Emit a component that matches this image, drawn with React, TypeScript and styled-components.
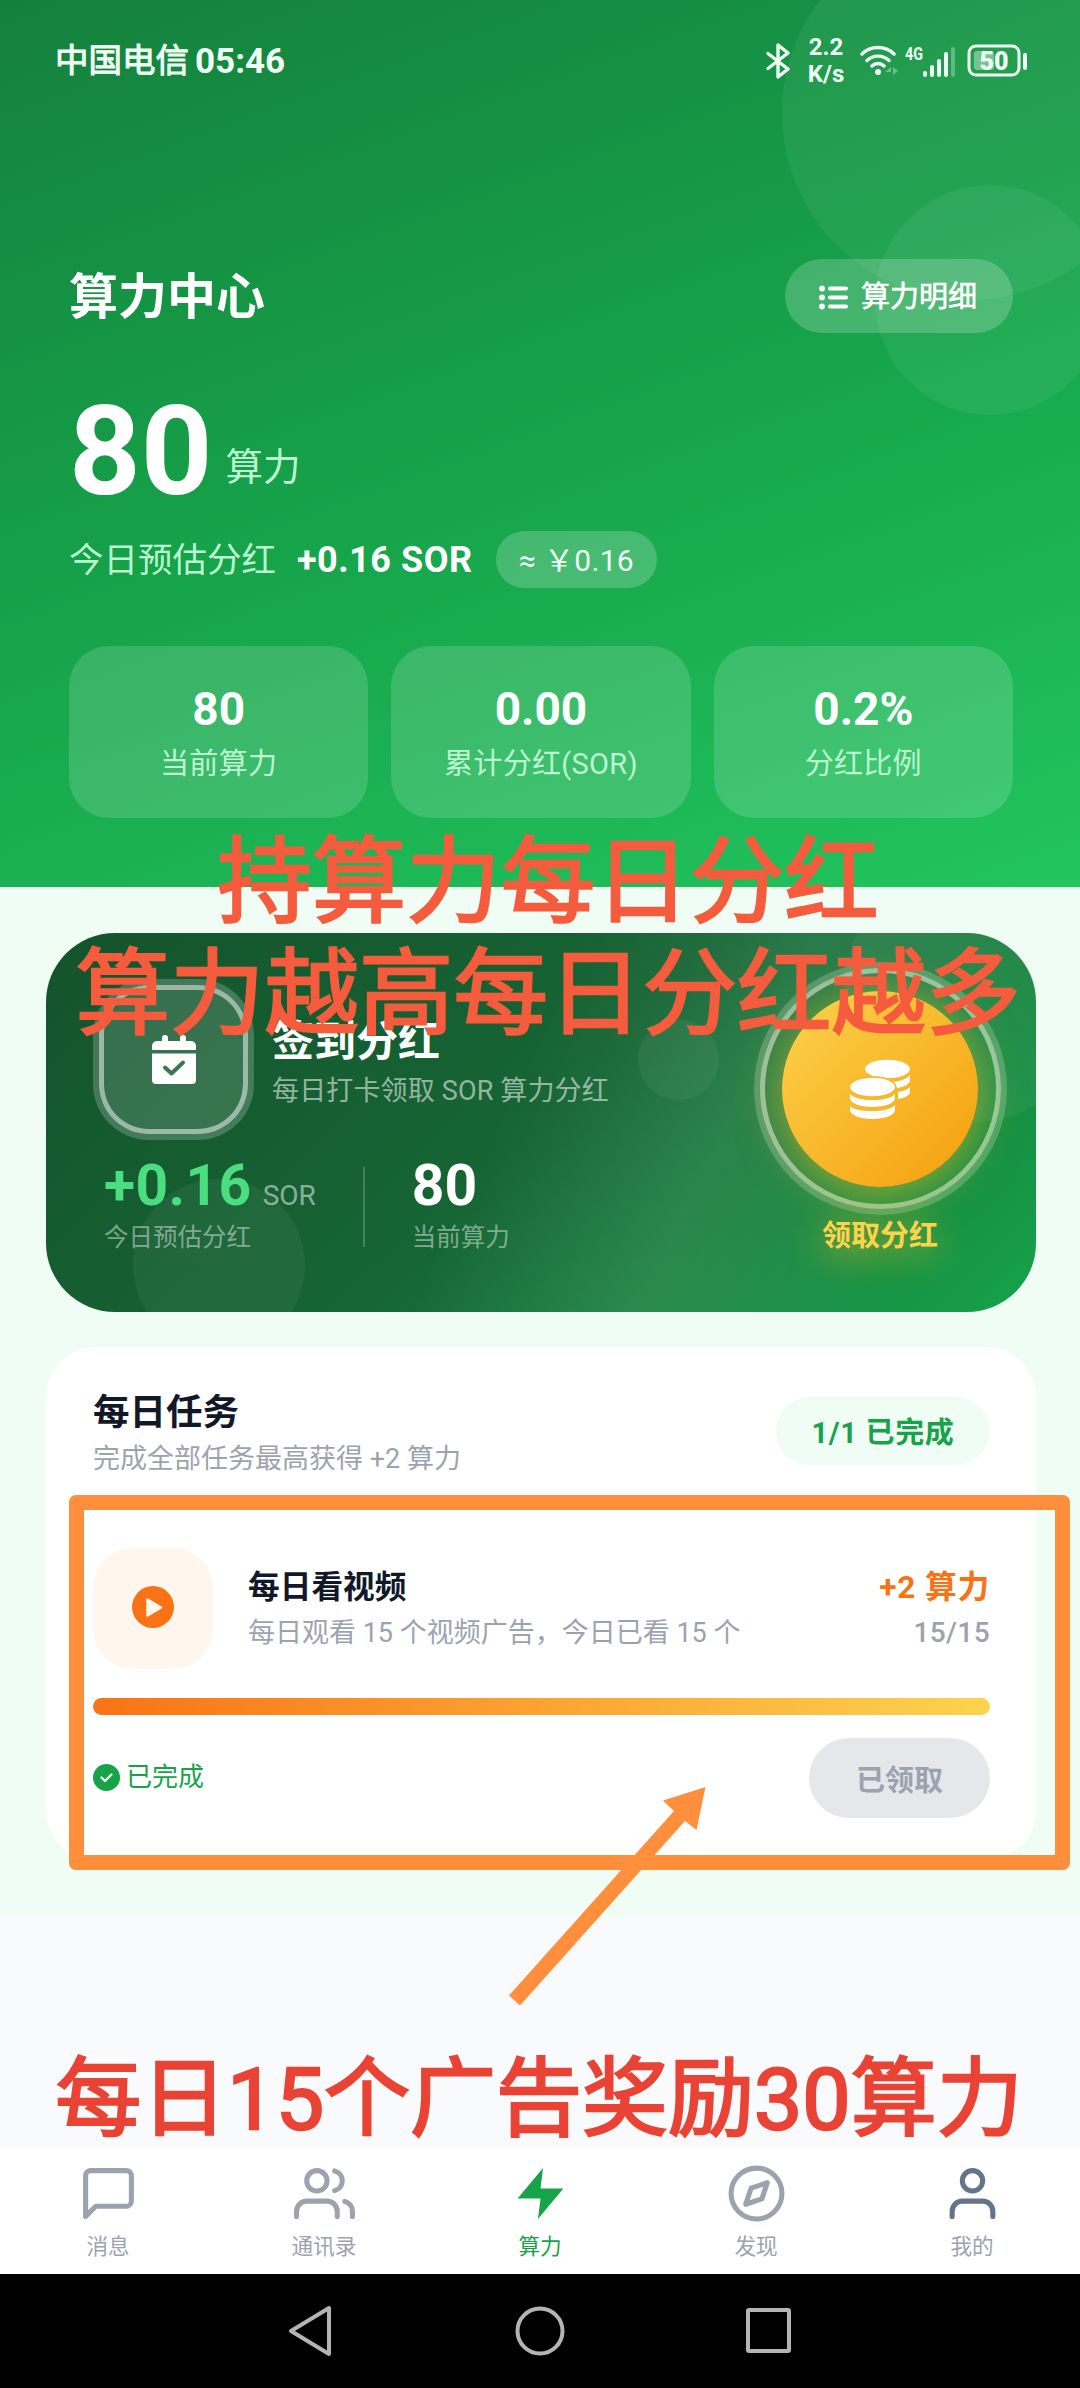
import React from "react";
import styled, { createGlobalStyle, css } from "styled-components";

const latin = `Roboto, "Noto Sans CJK SC", sans-serif`;

const Global = createGlobalStyle`
  * { box-sizing: border-box; }
  body { margin: 0; background: #f9fafb; font-family: ${latin}; }
`;

const Screen = styled.div`
  position: relative;
  width: 1080px;
  height: 2388px;
  overflow: hidden;
  display: flex;
  flex-direction: column;
  background: #f9fafb;
`;

const Txt = styled.span<{ $s: number; $c: string; $w?: number; $lh?: number; $ls?: number; $fat?: number }>`
  font-size: ${(p) => p.$s}px;
  line-height: ${(p) => p.$lh ?? p.$s}px;
  color: ${(p) => p.$c};
  font-weight: ${(p) => p.$w ?? 400};
  letter-spacing: ${(p) => p.$ls ?? 0}px;
  white-space: nowrap;
  ${(p) => p.$fat && css`-webkit-text-stroke: ${p.$fat}px ${p.$c};`}
`;

/* ---------- hero ---------- */
const Hero = styled.header`
  position: relative;
  overflow: hidden;
  height: 887px;
  flex: none;
  display: flex;
  flex-direction: column;
  background: linear-gradient(160deg, #15803d 0%, #16a34a 50%, #22c55e 100%);
`;

const Bubble = styled.i<{ $x: number; $y: number; $d: number; $a: number }>`
  position: absolute;
  left: ${(p) => p.$x}px;
  top: ${(p) => p.$y}px;
  width: ${(p) => p.$d}px;
  height: ${(p) => p.$d}px;
  border-radius: 50%;
  background: rgba(255, 255, 255, ${(p) => p.$a});
`;

const StatusBar = styled.div`
  position: relative;
  height: 120px;
  padding: 2px 52px 0 55px;
  display: flex;
  align-items: center;
  justify-content: space-between;
`;

const StatusGroup = styled.div<{ $gap: number }>`
  display: flex;
  align-items: center;
  gap: ${(p) => p.$gap}px;
`;

const Speed = styled.div`
  display: flex;
  flex-direction: column;
  align-items: center;
  width: 34px;
  margin: 0 17px 0 19px;
`;

const TitleRow = styled.div`
  position: relative;
  margin-top: 139px;
  height: 74px;
  padding: 0 67px 0 69px;
  display: flex;
  align-items: center;
  justify-content: space-between;
`;

const PageTitle = styled.h1`
  margin: 0;
  padding-top: 3px;
  font-size: 49px;
  line-height: 54px;
  font-weight: 700;
  color: #fff;
`;

const DetailButton = styled.button`
  width: 228px;
  height: 74px;
  border: 0;
  border-radius: 37px;
  padding: 2px 2px 0 0;
  font-family: inherit;
  background: rgba(255, 255, 255, 0.2);
  display: flex;
  align-items: center;
  justify-content: center;
  gap: 12px;
`;

const Balance = styled.div`
  margin-top: 51px;
  height: 136px;
  padding-left: 69px;
  display: flex;
  align-items: flex-end;
  gap: 13px;
`;

const Unit = styled.span`
  margin-bottom: 34px;
  font-size: 37.5px;
  line-height: 38px;
  color: #bbf7d0;
`;

const EstimateRow = styled.div`
  margin-top: 11px;
  height: 57px;
  padding-left: 69px;
  display: flex;
  align-items: center;
`;

const Gain = styled.strong`
  margin-left: 21px;
  width: 177px;
  font-size: 36px;
  line-height: 36px;
  letter-spacing: 0.5px;
  color: #fff;
  white-space: nowrap;
`;

const RatePill = styled.div`
  margin-left: 22px;
  width: 161px;
  height: 57px;
  border-radius: 29px;
  padding-top: 2px;
  background: rgba(255, 255, 255, 0.2);
  display: flex;
  align-items: center;
  justify-content: center;
`;

const Stats = styled.div`
  margin-top: 58px;
  padding: 0 67px 0 69px;
  display: grid;
  grid-template-columns: repeat(3, 1fr);
  gap: 23px;
`;

const Stat = styled.div`
  height: 172px;
  border-radius: 40px;
  background: rgba(255, 255, 255, 0.15);
  display: flex;
  flex-direction: column;
  align-items: center;
  padding-top: 36px;
  gap: 10px;
`;

/* ---------- body ---------- */
const Body = styled.main`
  height: 1029px;
  flex: none;
  padding: 46px 44px 0 46px;
  display: flex;
  flex-direction: column;
  gap: 35px;
  background: #f0fdf4;
`;

const SignCard = styled.section`
  position: relative;
  overflow: hidden;
  height: 379px;
  flex: none;
  border-radius: 69px;
  background: linear-gradient(135deg, #14532d 0%, #166534 50%, #16a34a 100%);
  display: flex;
`;

const Shine = styled.i`
  position: absolute;
  inset: 0;
  background: linear-gradient(115deg, transparent 46%, rgba(255, 255, 255, 0.09) 66%, transparent 88%);
`;

const SignLeft = styled.div`
  position: relative;
  flex: 1;
  padding: 52px 0 0 53px;
`;

const SignHead = styled.div`
  display: flex;
  gap: 24px;
`;

const CalendarBox = styled.div`
  width: 149px;
  height: 149px;
  border: 5px solid rgba(255, 255, 255, 0.5);
  border-radius: 50px;
  box-shadow: 0 0 0 6px rgba(255, 255, 255, 0.2);
  background: rgba(255, 255, 255, 0.15);
  display: flex;
  align-items: center;
  justify-content: center;
`;

const SignTitles = styled.div`
  padding-top: 32px;
  display: flex;
  flex-direction: column;
  gap: 8px;
`;

const SignStats = styled.div`
  margin: 22px 0 0 5px;
  display: flex;
  align-items: flex-start;
`;

const SignStat = styled.div`
  display: flex;
  flex-direction: column;
`;

const Line = styled.div`
  display: flex;
  align-items: baseline;
  height: 65px;
  gap: 11px;
`;

const Divider = styled.i`
  width: 2px;
  height: 80px;
  margin: 11px 47px 0 47px;
  background: rgba(255, 255, 255, 0.2);
`;

const Claim = styled.div`
  position: relative;
  width: 240px;
  margin-right: 36px;
  padding-top: 35px;
  display: flex;
  flex-direction: column;
  align-items: center;
`;

const Ring = styled.div`
  width: 241px;
  height: 241px;
  flex: none;
  border: 5px solid rgba(255, 255, 255, 0.5);
  border-radius: 50%;
  box-shadow: 0 0 0 6px rgba(255, 255, 255, 0.2);
  display: flex;
  align-items: center;
  justify-content: center;
`;

const Coin = styled.div`
  width: 196px;
  height: 196px;
  border-radius: 50%;
  background: linear-gradient(135deg, #fcd34d, #f59e0b);
  box-shadow: 0 6px 46px rgba(251, 191, 36, 0.6);
  display: flex;
  align-items: center;
  justify-content: center;
`;

const ClaimLabel = styled.div`
  margin-top: 7px;
  font-size: 29px;
  line-height: 40px;
  font-weight: 700;
  color: #fcd34d;
  text-shadow: 0 6px 36px rgba(251, 191, 36, 0.9);
`;

const TaskCard = styled.section`
  height: 513px;
  flex: none;
  border-radius: 50px;
  background: #fff;
  padding: 0 46px 0 47px;
  display: flex;
  flex-direction: column;
`;

const TaskHead = styled.div`
  padding-top: 44px;
  height: 154px;
  display: flex;
  justify-content: space-between;
`;

const Stack = styled.div<{ $gap: number; $end?: boolean }>`
  display: flex;
  flex-direction: column;
  gap: ${(p) => p.$gap}px;
  ${(p) => p.$end && css`align-items: flex-end;`}
`;

const DonePill = styled.div`
  margin-top: 6px;
  width: 214px;
  height: 68px;
  border-radius: 34px;
  padding-top: 4px;
  background: #f0fdf4;
  display: flex;
  align-items: center;
  justify-content: center;
`;

const TaskRow = styled.div`
  margin-top: 47px;
  height: 121px;
  display: flex;
  align-items: center;
`;

const TaskIcon = styled.div`
  width: 120px;
  height: 121px;
  margin-right: 35px;
  padding-bottom: 3px;
  border-radius: 40px;
  background: #fff7ed;
  display: flex;
  align-items: center;
  justify-content: center;
`;

const Grow = styled.div`
  flex: 1;
`;

const Progress = styled.div`
  margin-top: 29px;
  height: 17px;
  border-radius: 9px;
  background: linear-gradient(90deg, #f97316, #fcd34d);
`;

const TaskFoot = styled.div`
  margin-top: 23px;
  height: 80px;
  display: flex;
  align-items: center;
  justify-content: space-between;
`;

const DoneMark = styled.div`
  display: flex;
  align-items: center;
  gap: 6px;
  padding-bottom: 2px;
`;

const ClaimedButton = styled.button`
  width: 181px;
  height: 80px;
  border: 0;
  border-radius: 40px;
  background: #e5e7eb;
  color: #9ca3af;
  font: 700 29px ${latin};
`;

/* ---------- bottom bars ---------- */
const Spacer = styled.div`
  flex: 1;
`;

const TabBar = styled.nav`
  height: 126px;
  background: #fff;
  display: grid;
  grid-template-columns: repeat(5, 1fr);
`;

const Tab = styled.div<{ $c: string }>`
  color: ${(p) => p.$c};
  padding-top: 15px;
  display: flex;
  flex-direction: column;
  align-items: center;
  gap: 10px;
`;

const TabLabel = styled.span<{ $active: boolean }>`
  font-size: 21.6px;
  line-height: 26px;
  color: ${(p) => (p.$active ? "#16a34a" : "#9ca3af")};
`;

const SystemNav = styled.div`
  height: 114px;
  background: #000;
  display: flex;
  align-items: center;
  justify-content: center;
  gap: 179px;
`;

/* ---------- annotations drawn over the page ---------- */
const Note = styled.div<{ $top: number; $shift: number; $s: number; $lh: number; $c: string }>`
  position: absolute;
  left: ${(p) => p.$shift}px;
  width: 1080px;
  top: ${(p) => p.$top}px;
  text-align: center;
  font-size: ${(p) => p.$s}px;
  line-height: ${(p) => p.$lh}px;
  font-weight: 400;
  color: ${(p) => p.$c};
  -webkit-text-stroke: 2.4px ${(p) => p.$c};
  white-space: nowrap;
`;

const Frame = styled.div`
  position: absolute;
  left: 69px;
  top: 1495px;
  width: 1001px;
  height: 375px;
  border: 15px solid #ff8f3c;
  border-radius: 7px;
`;

const Arrow = styled.svg`
  position: absolute;
  left: 500px;
  top: 1780px;
`;

const feather = {
  width: 61,
  height: 61,
  viewBox: "0 0 24 24",
  fill: "none",
  stroke: "currentColor",
  strokeWidth: 2,
  strokeLinecap: "round" as const,
  strokeLinejoin: "round" as const,
};

const tabs = [
  { label: "消息", color: "#9ca3af", icon: <path d="M21 15a2 2 0 0 1-2 2H7l-4 4V5a2 2 0 0 1 2-2h14a2 2 0 0 1 2 2z" /> },
  {
    label: "通讯录",
    color: "#9ca3af",
    icon: (
      <>
        <path d="M17 21v-2a4 4 0 0 0-4-4H5a4 4 0 0 0-4 4v2" />
        <circle cx="9" cy="7" r="4" />
        <path d="M23 21v-2a4 4 0 0 0-3-3.87M16 3.13a4 4 0 0 1 0 7.75" />
      </>
    ),
  },
  { label: "算力", color: "#16a34a", icon: <path d="M13 2 3 14h9l-1 8 10-12h-9z" fill="currentColor" stroke="none" /> },
  {
    label: "发现",
    color: "#9ca3af",
    icon: (
      <>
        <circle cx="12" cy="12" r="10" />
        <path d="m16.24 7.76-2.12 6.36-6.36 2.12 2.12-6.36z" />
      </>
    ),
  },
  {
    label: "我的",
    color: "#64748b",
    icon: (
      <>
        <path d="M20 21v-2a4 4 0 0 0-4-4H8a4 4 0 0 0-4 4v2" />
        <circle cx="12" cy="7" r="4" />
      </>
    ),
  },
];

const stats = [
  ["80", "当前算力"],
  ["0.00", "累计分红(SOR)"],
  ["0.2%", "分红比例"],
];

const pale = "#f0fff4";

function StatusIcons() {
  return (
    <StatusGroup $gap={0}>
      <svg width="24" height="36" viewBox="0 0 24 36" fill="none" stroke={pale} strokeWidth="3.400" strokeLinejoin="round" strokeLinecap="round">
        <path d="M2 10.500 22 26 12 34V2l10 8L2 25.500" />
      </svg>
      <Speed>
        <Txt $s={24} $lh={27} $w={700} $c={pale}>2.2</Txt>
        <Txt $s={24} $lh={27} $w={700} $c={pale}>K/s</Txt>
      </Speed>
      <svg width="44" height="34" viewBox="0 0 44 34" fill="none" stroke={pale} strokeWidth="3.400" strokeLinecap="round">
        <path d="M2 10a23 23 0 0 1 32 0M7 16.500a16 16 0 0 1 22 0M12 22a8.500 8.500 0 0 1 12 0" />
        <circle cx="18" cy="28" r="3" fill={pale} stroke="none" />
        <path d="m31 23-6 5 6 0zM33 23v8l5-4z" fill={pale} stroke="none" opacity=".35" />
      </svg>
      <svg width="52" height="36" viewBox="0 0 52 36" fill={pale}>
        <text x="1" y="17" fontFamily="Roboto" fontWeight="700" fontSize="19" textLength="18" lengthAdjust="spacingAndGlyphs">4G</text>
        <rect x="19" y="28" width="4" height="6" rx="2" />
        <rect x="26" y="22" width="4" height="12" rx="2" />
        <rect x="33" y="16" width="4" height="18" rx="2" />
        <rect x="40" y="9" width="4" height="25" rx="2" />
        <rect x="47" y="4" width="4" height="30" rx="2" opacity=".3" />
      </svg>
      <svg width="72" height="34" viewBox="0 0 72 34" fill="none">
        <rect x="13" y="2" width="50" height="29" rx="7" stroke={pale} strokeWidth="3" />
        <rect x="18" y="7" width="20" height="19" rx="3" fill={pale} opacity=".4" />
        <rect x="67" y="9" width="4" height="17" rx="2" fill={pale} />
        <text x="38" y="25.500" textAnchor="middle" fontFamily="Roboto" fontWeight="900" fontSize="25" fill={pale}>50</text>
      </svg>
    </StatusGroup>
  );
}

export default function App() {
  return (
    <Screen>
      <Global />
      <Hero>
        <Bubble $x={782} $y={-74} $d={374} $a={0.06} />
        <Bubble $x={875} $y={185} $d={230} $a={0.06} />
        <StatusBar>
          <StatusGroup $gap={6}>
            <Txt $s={33.5} $fat={1} $c={pale}>中国电信</Txt>
            <Txt $s={35} $w={700} $c={pale}>05:46</Txt>
          </StatusGroup>
          <StatusIcons />
        </StatusBar>
        <TitleRow>
          <PageTitle>算力中心</PageTitle>
          <DetailButton>
            <svg width="30" height="25" viewBox="0 0 30 25" fill="#fff">
              <circle cx="3" cy="3.500" r="2.900" /><circle cx="3" cy="12.500" r="2.900" /><circle cx="3" cy="21.500" r="2.900" />
              <rect x="9" y="1.500" width="20" height="4" rx="2" /><rect x="9" y="10.500" width="20" height="4" rx="2" /><rect x="9" y="19.500" width="20" height="4" rx="2" />
            </svg>
            <Txt $s={29} $lh={32} $fat={0.6} $c="#fff">算力明细</Txt>
          </DetailButton>
        </TitleRow>
        <Balance>
          <Txt $s={125} $lh={136} $w={700} $c="#fff">80</Txt>
          <Unit>算力</Unit>
        </Balance>
        <EstimateRow>
          <Txt $s={34.5} $lh={38} $c="#bbf7d0">今日预估分红</Txt>
          <Gain>+0.16 SOR</Gain>
          <RatePill>
            <Txt $s={30} $ls={0.3} $c="#f0fdf4">≈ ￥0.16</Txt>
          </RatePill>
        </EstimateRow>
        <Stats>
          {stats.map(([value, label]) => (
            <Stat key={label}>
              <Txt $s={46} $lh={54} $w={700} $c="#fff">{value}</Txt>
              <Txt $s={29} $lh={36} $ls={0.3} $c="#bbf7d0">{label}</Txt>
            </Stat>
          ))}
        </Stats>
      </Hero>

      <Body>
        <SignCard>
          <Shine />
          <Bubble $x={797} $y={-70} $d={259} $a={0.05} />
          <Bubble $x={592} $y={86} $d={81} $a={0.05} />
          <Bubble $x={87} $y={246} $d={172} $a={0.05} />
          <SignLeft>
            <SignHead>
              <CalendarBox>
                <svg width="44" height="50" viewBox="0 0 44 50">
                  <path fill="#fff" d="M10 6V3a3 3 0 0 1 6 0v3h12V3a3 3 0 0 1 6 0v3h5a5 5 0 0 1 5 5v4H0v-4a5 5 0 0 1 5-5zM0 18.500h44V45a4 4 0 0 1-4 4H4a4 4 0 0 1-4-4z" />
                  <path d="m13 32.500 6.500 6L31 27.500" fill="none" stroke="#3a7650" strokeWidth="4" strokeLinecap="round" strokeLinejoin="round" />
                </svg>
              </CalendarBox>
              <SignTitles>
                <Txt $s={42} $lh={50} $w={700} $c="#fff">签到分红</Txt>
                <Txt $s={27} $lh={32} $ls={0.15} $c="rgba(255,255,255,.55)">每日打卡领取 SOR 算力分红</Txt>
              </SignTitles>
            </SignHead>
            <SignStats>
              <SignStat>
                <Line>
                  <Txt $s={57} $lh={60} $w={700} $ls={0.4} $c="#4ade80">+0.16</Txt>
                  <Txt $s={28} $c="rgba(255,255,255,.5)">SOR</Txt>
                </Line>
                <Txt $s={24.5} $lh={34} $c="rgba(255,255,255,.45)">今日预估分红</Txt>
              </SignStat>
              <Divider />
              <SignStat>
                <Line>
                  <Txt $s={57} $lh={60} $w={700} $c="#fff">80</Txt>
                </Line>
                <Txt $s={24.5} $lh={34} $c="rgba(255,255,255,.45)">当前算力</Txt>
              </SignStat>
            </SignStats>
          </SignLeft>
          <Claim>
            <Ring>
              <Coin>
                <svg width="60" height="60" viewBox="0 0 60 60">
                  <g fill="#fff">
                    <ellipse cx="37.500" cy="10" rx="22.500" ry="9.300" />
                    <path d="M60 16v5c0 4-6 7-13 8-1-3-4-5-7-6 9 0 17-3 20-7zM60 28v5c0 3-5 6-12 7v-7c6-1 10-3 12-5z" />
                    <ellipse cx="22.500" cy="28" rx="24" ry="11" fill="#f9b62b" />
                    <ellipse cx="22.500" cy="28" rx="22.500" ry="9.300" />
                    <path d="M0 35c4 4 12 6 22.500 6S41 39 45 35v4c0 5-10 9-22.500 9S0 44 0 39zM0 47c4 4 12 5 22.500 5S41 50 45 46v5c0 5-10 9-22.500 9S0 56 0 51z" />
                  </g>
                </svg>
              </Coin>
            </Ring>
            <ClaimLabel>领取分红</ClaimLabel>
          </Claim>
        </SignCard>

        <TaskCard>
          <TaskHead>
            <Stack $gap={8}>
              <Txt $s={36.5} $lh={44} $w={700} $c="#111827">每日任务</Txt>
              <Txt $s={27} $lh={32} $c="#9ca3af">完成全部任务最高获得 +2 算力</Txt>
            </Stack>
            <DonePill>
              <Txt $s={29} $lh={32} $w={700} $ls={0.7} $c="#16a34a">1/1 已完成</Txt>
            </DonePill>
          </TaskHead>
          <TaskRow>
            <TaskIcon>
              <svg width="42" height="42" viewBox="0 0 42 42">
                <circle cx="21" cy="21" r="21" fill="#f97316" />
                <path d="M15.500 13.500v16l13.500-8z" fill="#fff7ed" stroke="#fff7ed" strokeWidth="2.500" strokeLinejoin="round" />
              </svg>
            </TaskIcon>
            <Stack $gap={9}>
              <Txt $s={31.7} $lh={40} $w={700} $c="#111827">每日看视频</Txt>
              <Txt $s={27} $lh={32} $c="#9ca3af">每日观看 15 个视频广告，今日已看 15 个</Txt>
            </Stack>
            <Grow />
            <Stack $gap={9} $end>
              <Txt $s={31.7} $lh={40} $w={700} $ls={0.8} $c="#f97316">+2 算力</Txt>
              <Txt $s={28} $lh={32} $w={500} $ls={0.4} $c="#9ca3af">15/15</Txt>
            </Stack>
          </TaskRow>
          <Progress />
          <TaskFoot>
            <DoneMark>
              <svg width="27" height="27" viewBox="0 0 27 27">
                <circle cx="13.500" cy="13.500" r="13.500" fill="#16a34a" />
                <path d="m8.500 13.500 3.500 3.500 6.500-6.500" fill="none" stroke="#fff" strokeWidth="2.200" strokeLinecap="round" strokeLinejoin="round" />
              </svg>
              <Txt $s={26} $c="#16a34a">已完成</Txt>
            </DoneMark>
            <ClaimedButton>已领取</ClaimedButton>
          </TaskFoot>
        </TaskCard>
      </Body>

      <Spacer />

      <TabBar>
        {tabs.map((t) => (
          <Tab key={t.label} $c={t.color}>
            <svg {...feather}>{t.icon}</svg>
            <TabLabel $active={t.label === "算力"}>{t.label}</TabLabel>
          </Tab>
        ))}
      </TabBar>

      <SystemNav>
        <svg width="50" height="52" viewBox="0 0 50 52" fill="none" stroke="#b4b4b4" strokeWidth="4" strokeLinejoin="round">
          <path d="M43 3v46L5 26z" />
        </svg>
        <svg width="50" height="52" viewBox="0 0 50 52" fill="none" stroke="#b4b4b4" strokeWidth="4">
          <circle cx="25" cy="26" r="22.500" />
        </svg>
        <svg width="50" height="52" viewBox="0 0 50 52" fill="none" stroke="#b4b4b4" strokeWidth="4">
          <rect x="4" y="5" width="41" height="41" rx="1" />
        </svg>
      </SystemNav>

      <Note $top={827} $shift={8} $s={94.5} $lh={111.5} $c="#f55b3d">
        持算力每日分红
        <br />
        算力越高每日分红越多
      </Note>
      <Note $top={2042} $shift={-1} $s={86} $lh={116} $c="#e94335">每日15个广告奖励30算力</Note>
      <Frame />
      <Arrow width="220" height="240" viewBox="500 1780 220 240" fill="#ff8f3c">
        <path d="M509 1995.500 674 1811 663 1800.500 705.500 1787 696.500 1830 685 1821 520 2005.500z" />
      </Arrow>
    </Screen>
  );
}
